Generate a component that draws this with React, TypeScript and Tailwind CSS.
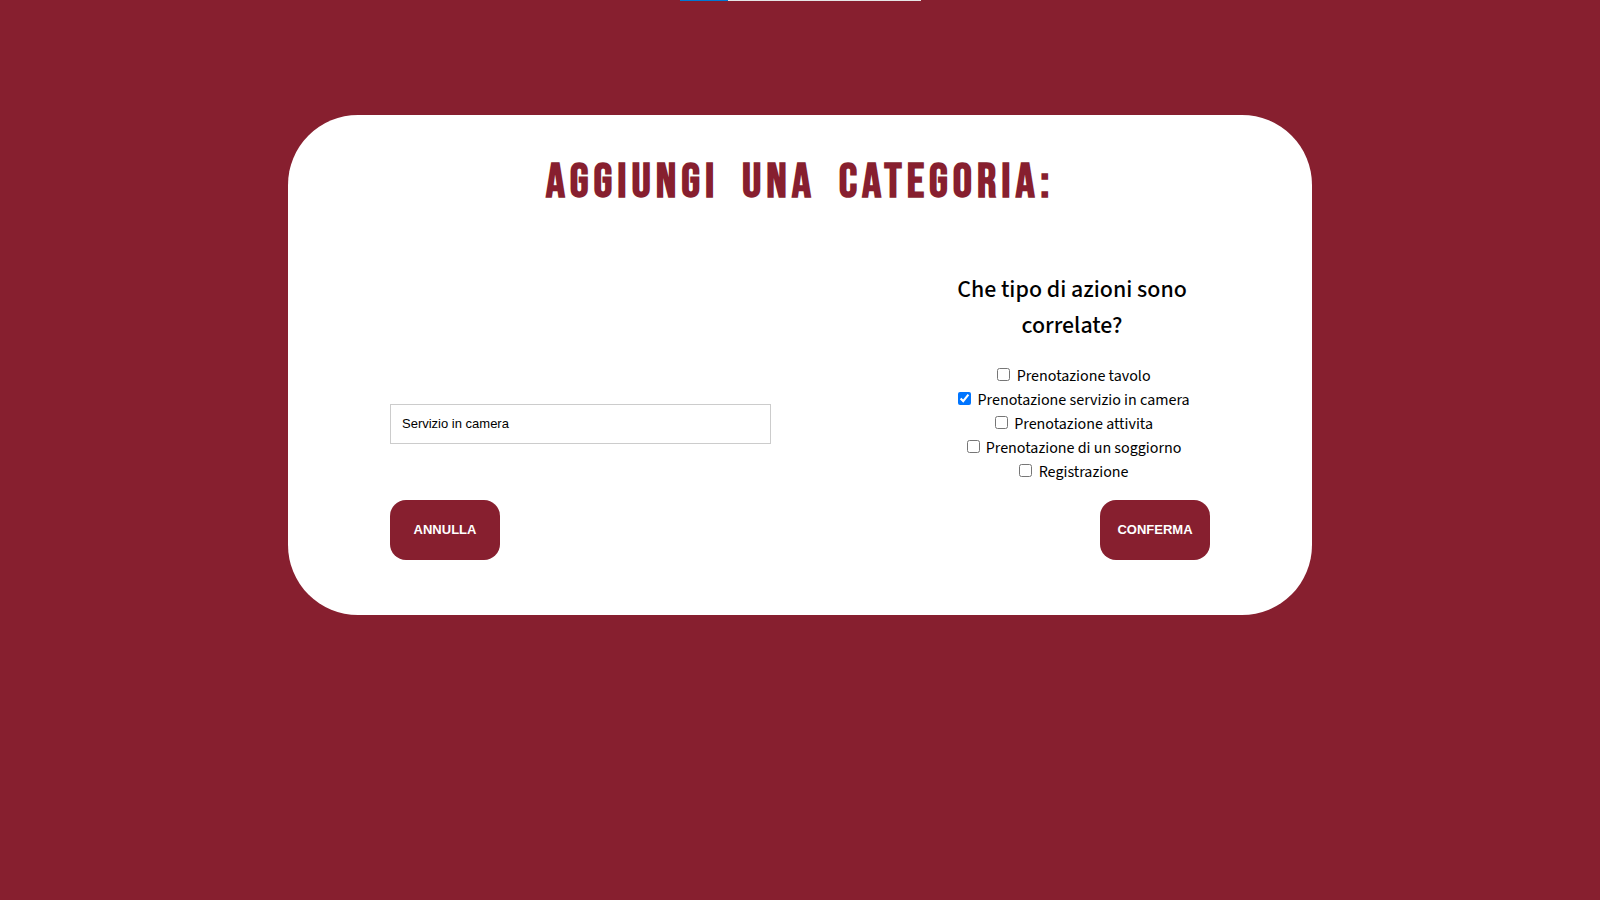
import { useState } from "react";

const actions = [
  "Prenotazione tavolo",
  "Prenotazione servizio in camera",
  "Prenotazione attivita",
  "Prenotazione di un soggiorno",
  "Registrazione",
];

const buttonClass =
  "h-[60px] w-[110px] cursor-pointer rounded-2xl bg-[#871f2f] font-['Liberation_Sans',sans-serif] text-[13px] font-bold text-white";

export default function App() {
  const [name, setName] = useState("Servizio in camera");
  const [selected, setSelected] = useState<string[]>([actions[1]]);

  const toggle = (action: string) =>
    setSelected((current) =>
      current.includes(action)
        ? current.filter((item) => item !== action)
        : [...current, action],
    );

  return (
    <main className="min-h-screen bg-[#871f2f] font-['Source_Sans_Pro','Source_Sans_3','Noto_Sans_CJK_SC',sans-serif] text-black">
      <div className="mx-auto flex h-px w-[241px]" aria-hidden="true">
        <div className="w-12 bg-[#0078d4]" />
        <div className="grow bg-[#e6e6e6]" />
      </div>
      <form
        className="mx-auto mt-[114px] w-[64%] rounded-[70px] bg-white px-[102px] pt-8 pb-[55px]"
        onSubmit={(event) => event.preventDefault()}
      >
        <h1 className="text-center font-['Bebas_Neue','Roboto_Condensed',sans-serif] text-5xl leading-[72px] font-bold tracking-[5px] [word-spacing:10px] text-[#871f2f]">
          AGGIUNGI UNA CATEGORIA:
        </h1>
        <div className="mt-[53px] flex items-end justify-between">
          <input
            type="text"
            aria-label="Nome della categoria"
            className="mb-10 h-10 w-[381px] border border-[#cccccc] bg-white px-[11px] pb-0.5 font-['Liberation_Sans',sans-serif] text-[13px]"
            value={name}
            onChange={(event) => setName(event.target.value)}
          />
          <fieldset className="w-[276px] text-center">
            <legend className="mb-5 w-full text-2xl leading-9 font-medium">
              Che tipo di azioni sono correlate?
            </legend>
            {actions.map((action) => (
              <label key={action} className="block h-6 text-base leading-6">
                <input
                  type="checkbox"
                  className="mr-[3px] ml-1 size-[13px]"
                  checked={selected.includes(action)}
                  onChange={() => toggle(action)}
                />{" "}
                {action}
              </label>
            ))}
          </fieldset>
        </div>
        <div className="mt-4 flex justify-between">
          <button type="button" className={buttonClass}>
            ANNULLA
          </button>
          <button type="submit" className={buttonClass}>
            CONFERMA
          </button>
        </div>
      </form>
    </main>
  );
}
